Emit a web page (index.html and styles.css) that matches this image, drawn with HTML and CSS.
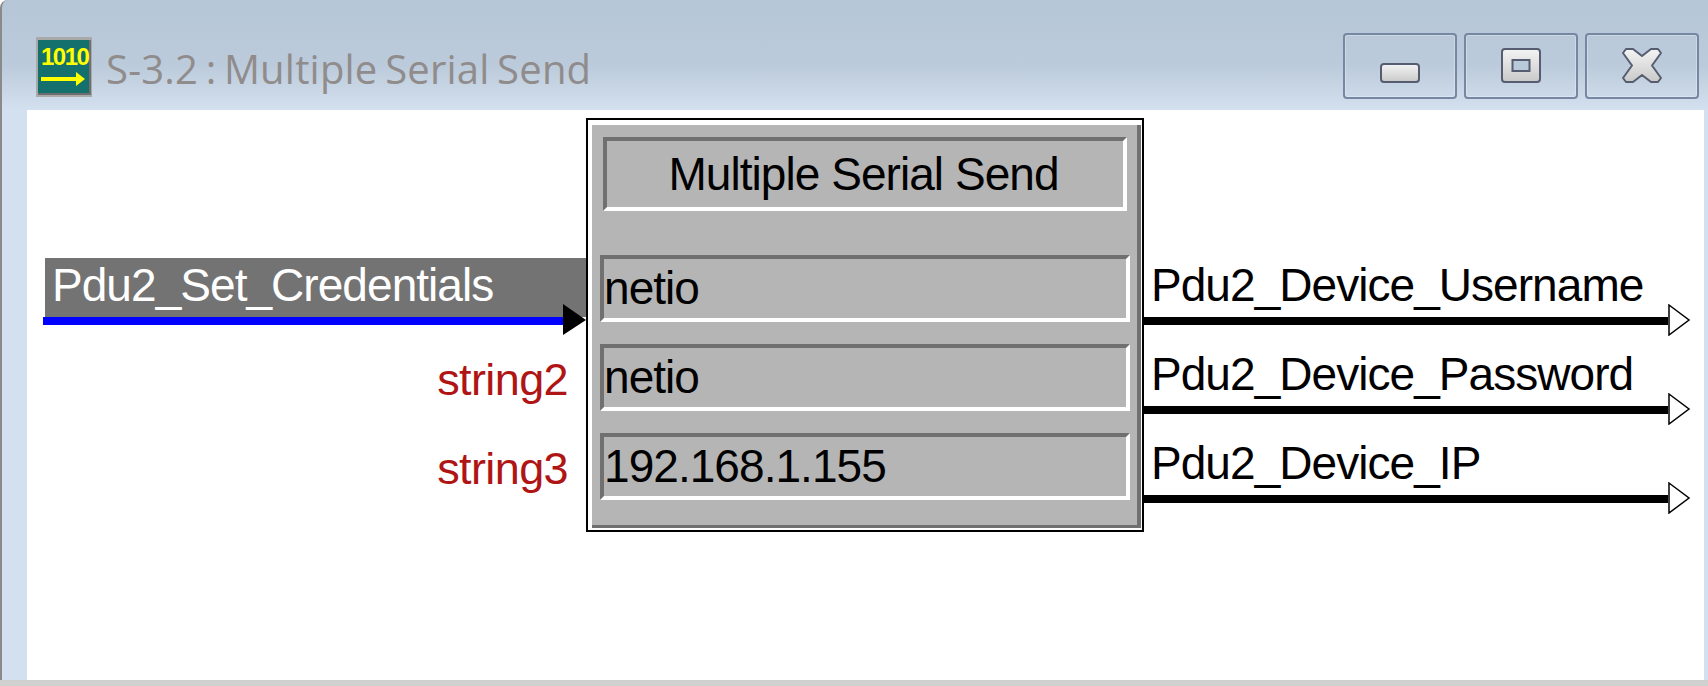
FILE: index.html
```html
<!DOCTYPE html>
<html lang="en">
<head>
  <meta charset="UTF-8" />
  <meta name="viewport" content="width=device-width, initial-scale=1.0" />
  <title>S-3.2 : Multiple Serial Send</title>
  <link rel="stylesheet" href="styles.css">
</head>
<body>
  <div class="window">
    <!-- Title bar -->
    <div class="titlebar">
      <svg class="app-icon" viewBox="0 0 56 60" width="56" height="60">
        <rect x="0" y="0" width="56" height="60" fill="#a9a9a9"/>
        <rect x="2" y="3" width="52" height="54" fill="#14706c"/>
        <path d="M54 3V57H2" fill="none" stroke="#6e6e6e" stroke-width="2"/>
        <text class="app-icon-bits" x="5" y="28">1010</text>
        <path d="M5 42H44" stroke="#ffff00" stroke-width="4"/>
        <path d="M40 35L49 42L40 49Z" fill="#ffff00"/>
      </svg>
      <span class="window-title">S-3.2 : Multiple Serial Send</span>
      <div class="window-buttons">
        <button class="win-btn">
          <svg class="win-glyph" viewBox="0 0 42 36" width="42" height="36">
            <defs>
              <linearGradient id="glyphFill" x1="0" y1="0" x2="0" y2="1">
                <stop offset="0" stop-color="#f4f4f4"/>
                <stop offset="1" stop-color="#c9c9c9"/>
              </linearGradient>
            </defs>
            <rect x="2" y="16" width="38" height="18" rx="3" fill="url(#glyphFill)" stroke="#565d70" stroke-width="2"/>
          </svg>
        </button>
        <button class="win-btn">
          <svg class="win-glyph" viewBox="0 0 42 36" width="42" height="36">
            <rect x="2" y="1" width="38" height="33" rx="3" fill="url(#glyphFill)" stroke="#565d70" stroke-width="2"/>
            <rect x="12.5" y="12" width="17" height="11" fill="#b8c9da" stroke="#565d70" stroke-width="2"/>
          </svg>
        </button>
        <button class="win-btn">
          <svg class="win-glyph" viewBox="0 0 42 36" width="42" height="36">
            <path d="M5 1H12L21 8L30 1H37L40 5L31 17.500L40 30L37 34H30L21 27L12 34H5L2 30L11 17.500L2 5Z" fill="url(#glyphFill)" stroke="#565d70" stroke-width="2" stroke-linejoin="round"/>
          </svg>
        </button>
      </div>
    </div>

    <div class="frame">
      <div class="diagram">
        <!-- Input signals -->
        <div class="inputs">
          <div class="signal-row">
            <div class="bar-label">Pdu2_Set_Credentials</div>
            <div class="wire wire-blue">
              <svg class="arrow-in" viewBox="0 0 23 31" width="23" height="31"><path d="M0 0L23 16L0 31Z" fill="#000"/></svg>
            </div>
          </div>
          <div class="signal-row"><div class="param-name">string2</div></div>
          <div class="signal-row"><div class="param-name">string3</div></div>
        </div>

        <!-- Symbol -->
        <div class="node">
          <div class="node-face">
            <div class="node-title">Multiple Serial Send</div>
            <div class="node-field">netio</div>
            <div class="node-field">netio</div>
            <div class="node-field">192.168.1.155</div>
          </div>
        </div>

        <!-- Output signals -->
        <div class="outputs">
          <div class="output-row">
            <div class="signal-name">Pdu2_Device_Username</div>
            <div class="wire wire-black">
              <svg class="arrow-out" viewBox="0 0 23 32" width="23" height="32"><path d="M1 1L21 16L1 31Z" fill="#fff" stroke="#000" stroke-width="1.500"/></svg>
            </div>
          </div>
          <div class="output-row">
            <div class="signal-name">Pdu2_Device_Password</div>
            <div class="wire wire-black">
              <svg class="arrow-out" viewBox="0 0 23 32" width="23" height="32"><path d="M1 1L21 16L1 31Z" fill="#fff" stroke="#000" stroke-width="1.500"/></svg>
            </div>
          </div>
          <div class="output-row">
            <div class="signal-name">Pdu2_Device_IP</div>
            <div class="wire wire-black">
              <svg class="arrow-out" viewBox="0 0 23 32" width="23" height="32"><path d="M1 1L21 16L1 31Z" fill="#fff" stroke="#000" stroke-width="1.500"/></svg>
            </div>
          </div>
        </div>
      </div>
    </div>
    <div class="bottom-strip"></div>
  </div>
</body>
</html>
```

FILE: styles.css
```css
body {
  margin: 0;
  padding: 0;
  background: #fff;
  font-family: "Liberation Sans", Arial, sans-serif;
  overflow: hidden;
}
.window {
  width: 1708px;
  height: 686px;
  display: flex;
  flex-direction: column;
}

/* title bar */
.titlebar {
  height: 110px;
  box-sizing: border-box;
  flex: none;
  display: flex;
  align-items: flex-start;
  padding: 37px 9px 0 34px;
  border-left: 2px solid #8a8a8a;
  border-top-left-radius: 8px;
  background: linear-gradient(180deg, #b5c6d6 0%, #bccbdb 60%, #d3e0ef 100%);
}
.app-icon {
  flex: none;
}
.app-icon-bits {
  font-family: "Liberation Sans", sans-serif;
  font-weight: bold;
  font-size: 24px;
  letter-spacing: -1.5px;
  fill: #ffff00;
}
.window-title {
  margin: 5px 0 0 14px;
  font-family: "Open Sans", sans-serif;
  font-size: 40px;
  letter-spacing: 0.2px;
  word-spacing: -3px;
  line-height: 54px;
  color: #918c8c;
}
.window-buttons {
  margin: -4px 0 0 auto;
  display: flex;
  gap: 7px;
}
.win-btn {
  width: 114px;
  height: 66px;
  padding: 0;
  box-sizing: border-box;
  border: 2px solid #7587a3;
  border-radius: 4px;
  background: transparent;
  box-shadow: inset 0 0 0 1px rgba(255, 255, 255, 0.3);
  display: flex;
  justify-content: center;
  align-items: flex-start;
}
.win-glyph {
  margin-top: 13px;
}

/* window body */
.frame {
  flex: 1;
  display: flex;
  padding: 0 4px 0 25px;
  border-left: 2px solid #8a8a8a;
  background: #d3e0ef;
}
.diagram {
  flex: 1;
  display: flex;
  align-items: flex-start;
  padding-top: 8px;
  background: #fff;
}
.bottom-strip {
  height: 6px;
  flex: none;
  background: #d0d0d0;
}

/* signals on the left */
.inputs {
  width: 559px;
  flex: none;
  padding-top: 140px;
}
.signal-row {
  height: 89px;
}
.bar-label {
  height: 59px;
  margin-left: 18px;
  padding-left: 7px;
  box-sizing: border-box;
  background: #737373;
  color: #fff;
  font-size: 46px;
  letter-spacing: -0.95px;
  line-height: 54px;
}
.wire {
  height: 8px;
  position: relative;
}
.wire-blue {
  margin-left: 16px;
  margin-right: 23px;
  background: #0000ff;
}
.wire-black {
  width: 524px;
  background: #000;
}
.arrow-in {
  position: absolute;
  left: 100%;
  top: -13px;
}
.arrow-out {
  position: absolute;
  left: 100%;
  top: -13px;
}
.param-name {
  padding: 8px 18px 0 0;
  text-align: right;
  color: #b01515;
  font-size: 45px;
  letter-spacing: -0.6px;
  line-height: 50px;
}

/* the block itself */
.node {
  width: 558px;
  height: 414px;
  flex: none;
  box-sizing: border-box;
  border: 2px solid #000;
  padding: 5px 1px 2px 4px;
  background: #fff;
}
.node-face {
  height: 100%;
  box-sizing: border-box;
  padding: 12px 7px 0 8px;
  background: #b5b5b5;
  border-right: 4px solid #707070;
  border-bottom: 3px solid #707070;
  color: #000;
  font-size: 46px;
  letter-spacing: -0.95px;
}
.node-title {
  height: 74px;
  margin: 0 3px 44px 3px;
  padding-right: 3px;
  box-sizing: border-box;
  border-style: solid;
  border-width: 4px;
  border-color: #707070 #fff #fff #707070;
  text-align: center;
  line-height: 66px;
}
.node-field {
  height: 67px;
  margin-bottom: 22px;
  box-sizing: border-box;
  border-style: solid;
  border-width: 4px;
  border-color: #707070 #fff #fff #707070;
  line-height: 58px;
}

/* signals on the right */
.outputs {
  flex: none;
  padding-top: 140px;
}
.output-row {
  height: 89px;
}
.signal-name {
  height: 59px;
  padding: 2px 0 0 7px;
  box-sizing: border-box;
  color: #000;
  font-size: 46px;
  letter-spacing: -0.95px;
  line-height: 50px;
}
```
